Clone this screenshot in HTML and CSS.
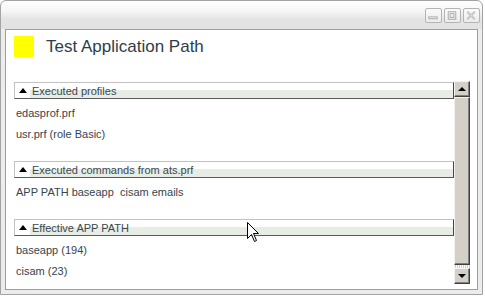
FILE: index.html
```html
<!DOCTYPE html>
<html>
<head>
<meta charset="utf-8">
<link rel="stylesheet" href="styles.css">
</head>
<body>
<div class="window">
  <div class="titlebar">
    <div class="tbtn">
      <svg width="17" height="15" viewBox="0 0 17 15"><rect x="4" y="9" width="9" height="2" fill="none" stroke="#a9a9a9" stroke-width="1"/></svg>
    </div>
    <div class="tbtn">
      <svg width="17" height="15" viewBox="0 0 17 15"><rect x="4.5" y="3.5" width="8" height="8" fill="none" stroke="#a9a9a9"/><rect x="6.5" y="5.5" width="4" height="4" fill="none" stroke="#a9a9a9"/></svg>
    </div>
    <div class="tbtn">
      <svg width="17" height="15" viewBox="0 0 17 15"><path d="M4.5 3.5 L12.5 11.5 M12.5 3.5 L4.5 11.5" stroke="#b0b0b0" stroke-width="2" fill="none"/><path d="M4.5 3.5 L12.5 11.5 M12.5 3.5 L4.5 11.5" stroke="#f4f4f4" stroke-width="0.8" fill="none"/></svg>
    </div>
  </div>
  <div class="client">
    <div class="heading">
      <div class="swatch"></div>
      <div class="title">Test Application Path</div>
    </div>
    <div class="scrollarea">
      <div class="content">
        <div class="section">
          <div class="sec-head"><span class="tri"></span><span class="label">Executed profiles</span></div>
          <div class="items">
            <div class="item">edasprof.prf</div>
            <div class="item">usr.prf (role Basic)</div>
          </div>
        </div>
        <div class="section">
          <div class="sec-head"><span class="tri"></span><span class="label">Executed commands from ats.prf</span></div>
          <div class="items">
            <div class="item">APP PATH baseapp  cisam emails</div>
          </div>
        </div>
        <div class="section">
          <div class="sec-head"><span class="tri"></span><span class="label">Effective APP PATH</span></div>
          <div class="items">
            <div class="item">baseapp (194)</div>
            <div class="item">cisam (23)</div>
          </div>
        </div>
      </div>
      <div class="scrollbar">
        <div class="sbtn"><span class="up"></span></div>
        <div class="thumb"></div>
        <div class="track"></div>
        <div class="sbtn"><span class="down"></span></div>
      </div>
    </div>
  </div>
  <svg class="cursor" width="13" height="21" viewBox="0 0 13 21"><path d="M0.5 0.5 L0.5 16.5 L4.5 12.5 L7.5 19.5 L9.5 18.5 L6.5 11.5 L11.5 11.5 Z" fill="#fff" stroke="#000" stroke-width="1"/></svg>
</div>
</body>
</html>
```

FILE: styles.css
```css
html, body {
  margin: 0;
  padding: 0;
  background: #ffffff;
}
body {
  font-family: "Liberation Sans", Arial, sans-serif;
  font-size: 11px;
  color: #36444e;
}
.window {
  position: relative;
  box-sizing: border-box;
  width: 483px;
  height: 295px;
  border: 1px solid #a3a3a3;
  border-radius: 6px 6px 0 0;
  background: linear-gradient(#fdfdfd 0px, #f6f6f6 10px, #e4e4e4 18px, #e2e2e2 28px, #ededed 28px, #ececec 100%);
  display: flex;
  flex-direction: column;
}
.titlebar {
  height: 28px;
  display: flex;
  justify-content: flex-end;
  align-items: flex-start;
  gap: 2px;
  padding: 7px 2px 0 0;
  box-sizing: border-box;
}
.tbtn {
  width: 17px;
  height: 15px;
  box-sizing: border-box;
  border: 1px solid #b4b4b4;
  border-radius: 2px;
  background: linear-gradient(#fafafa, #ececec);
  display: flex;
}
.tbtn svg {
  margin: -1px 0 0 -1px;
}
.client {
  flex: 1;
  margin: 0 4px 4px 4px;
  border: 1px solid #9d9d9d;
  background: #ffffff;
  padding: 6px 7px 5px 8px;
  display: flex;
  flex-direction: column;
}
.heading {
  display: flex;
  align-items: center;
  height: 21px;
  margin-bottom: 24px;
}
.swatch {
  width: 20px;
  height: 21px;
  background: #ffff00;
}
.title {
  margin-left: 12px;
  font-size: 17px;
  color: #2e3d49;
}
.scrollarea {
  height: 203px;
  display: flex;
  overflow: hidden;
}
.content {
  width: 440px;
  display: flex;
  flex-direction: column;
  padding-top: 1px;
}
.section {
  margin-bottom: 16px;
}
.sec-head {
  height: 17px;
  box-sizing: border-box;
  border-top: 1px solid #c2c2c2;
  border-left: 1px solid #c2c2c2;
  border-right: 1px solid #454545;
  border-bottom: 1px solid #5a5a5a;
  display: flex;
}
.tri {
  width: 15px;
  position: relative;
  background: #fff;
}
.tri::after {
  content: "";
  position: absolute;
  left: 4px;
  top: 5px;
  border-left: 4px solid transparent;
  border-right: 4px solid transparent;
  border-bottom: 5px solid #000;
}
.label {
  flex: 1;
  padding-left: 2px;
  line-height: 16px;
  background: linear-gradient(#ffffff 0, #ffffff 7px, #e7ece5 7px, #e7ece5 100%);
  color: #3a4852;
}
.items {
  padding-top: 4px;
}
.item {
  height: 21px;
  line-height: 21px;
  padding-left: 2px;
  white-space: pre;
}
.scrollbar {
  width: 16px;
  display: flex;
  flex-direction: column;
}
.sbtn {
  width: 16px;
  height: 16px;
  box-sizing: border-box;
  background: #d4d0c8;
  border-top: 1px solid #f4f2ee;
  border-left: 1px solid #f4f2ee;
  border-right: 1px solid #404040;
  border-bottom: 1px solid #404040;
  box-shadow: inset -1px -1px 0 #808080;
  position: relative;
}
.up, .down {
  position: absolute;
  left: 3px;
  width: 0;
  height: 0;
  border-left: 4px solid transparent;
  border-right: 4px solid transparent;
}
.up {
  top: 5px;
  border-bottom: 4px solid #000;
}
.down {
  top: 5px;
  border-top: 4px solid #000;
}
.thumb {
  flex: 1;
  box-sizing: border-box;
  background: #d4d0c8;
  border-top: 1px solid #f4f2ee;
  border-left: 1px solid #f4f2ee;
  border-right: 1px solid #404040;
  border-bottom: 1px solid #404040;
  box-shadow: inset -1px -1px 0 #808080;
}
.track {
  height: 3px;
  background-image: repeating-linear-gradient(90deg, #ffffff 0 1px, #d4d0c8 1px 2px);
}
.cursor {
  position: absolute;
  left: 246px;
  top: 221px;
}
```
